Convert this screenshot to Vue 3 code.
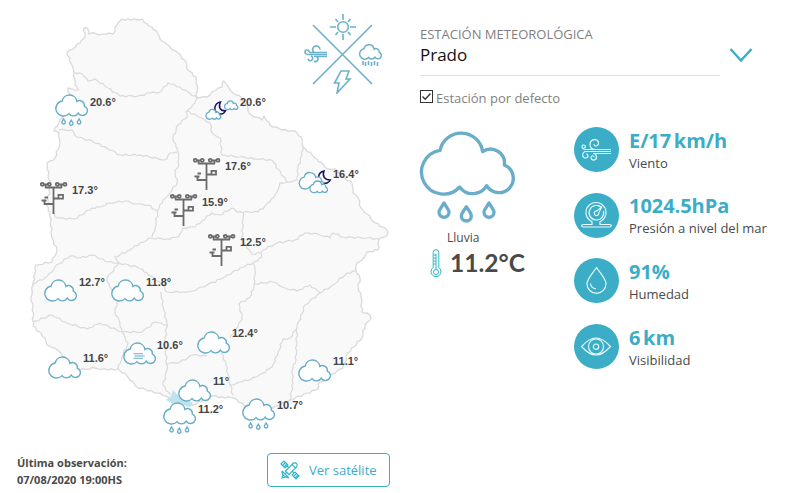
<template>
  <main class="weather">
    <section class="map-panel">
      <div class="map">
        <svg class="map-shape" viewBox="0 0 400 440" aria-hidden="true">
          <path class="land" :d="outlinePath" />
          <path v-for="(d, index) in borderPaths" :key="index" class="border" :d="d" />
          <polygon class="capital" points="173,390 178,395 183,394 188,400 193,403 190,407 179,405 173,404 166,400 171,396" />
        </svg>

        <svg class="compass" width="80" height="80" viewBox="0 0 80 80" aria-hidden="true">
          <path d="M9 11 68 70M68 11 9 70" />
          <circle cx="39" cy="13" r="5.3" />
          <path d="M39 0v6M39 20v6M26 13h6M46 13h6M31.500 5l2.500 3M46.500 5 44 8M31.500 21l2.500-3M46.500 21l-2.500-3" />
          <path d="M37 57h8l-3 8h4L33 79l2-10h-4.500z" />
          <g transform="translate(55 30) scale(.079)">
            <path class="compass-cloud" :d="cloudPath" transform="translate(-42 -30)" />
          </g>
          <path d="M59 47v4M61.500 48v4M64.500 47v4M67.500 48v4M70.500 47v4M73.500 48v4" />
          <path d="M3 40.500h20M10 42.500h13M5 38.500h18M3 40a2 2 0 1 1 2-2M10 38.500a3.700 3.700 0 1 1 6-3M7 42a2.400 2.400 0 1 1-3 3M13 43a2.500 2.500 0 1 1-3 4" />
        </svg>

        <template v-for="station in stations" :key="station.id">
          <svg
            v-if="station.icon === 'mast'"
            class="marker"
            :style="{ left: station.x + 'px', top: station.y + 'px' }"
            width="28"
            height="33"
            viewBox="0 0 28 33"
          >
            <g class="mast">
              <circle cx="2.300" cy="2.300" r="1.500" />
              <circle cx="9.300" cy="2.300" r="1.500" />
              <circle cx="17.300" cy="2.300" r="1.500" />
              <circle cx="25" cy="2.300" r="1.500" />
              <path d="M4 2.500h4M19 2.500h4.500M5 5.500h17M5.500 2.500v3M21.500 2.500v3M13.500 5.500V32M13.500 16.500h5M18.500 12.800h4.500v3.800h-4.500zM13.500 22H4.500v-3.500M1.500 18.500h5M4.500 15.500H8" />
            </g>
          </svg>
          <svg
            v-else-if="station.icon === 'night'"
            class="marker"
            :style="{ left: station.x + 'px', top: station.y + 'px' }"
            width="34"
            height="21"
            viewBox="0 0 34 21"
          >
            <path class="small-cloud" :d="cloudPath" transform="translate(17.200 -2) scale(.048)" />
            <path class="moon" d="M15.500 1C9 2.200 8 10 13 12.300c3.500 1.500 6.300 0 7.500-2.500C15 10 13 6 15.500 1z" />
            <path class="small-cloud" :d="cloudPath" transform="translate(-1.700 6.300) scale(.054)" />
          </svg>
          <svg
            v-else-if="station.icon === 'cloudy-night'"
            class="marker"
            :style="{ left: station.x + 'px', top: station.y + 'px' }"
            width="34"
            height="25"
            viewBox="0 0 34 25"
          >
            <path class="moon" d="M26 1C19.500 2.500 19 10 24 12.700c3.500 1.600 7 0 8.300-2.700C26.500 10 24 6 26 1z" />
            <path class="small-cloud" :d="cloudPath" transform="translate(-3.300 -1) scale(.09)" />
            <path class="small-cloud" :d="cloudPath" transform="translate(8.700 8.500) scale(.064)" />
          </svg>
          <svg
            v-else
            class="marker"
            :style="{ left: station.x + 'px', top: station.y + 'px' }"
            width="33"
            height="33"
            viewBox="42 30 288 288"
          >
            <path class="cloud" :d="cloudPath" />
            <path v-if="station.icon === 'rain'" class="cloud" :d="dropsPath" />
            <path v-if="station.icon === 'fog'" class="fog" d="M134 133h83M143 152h88M134 171h83" />
          </svg>
          <span class="temp" :style="{ left: station.tx + 'px', top: station.ty + 'px' }">{{ station.temp }}°</span>
        </template>
      </div>

      <footer class="map-footer">
        <p class="updated">Última observación:<br />07/08/2020 19:00HS</p>
        <button type="button" class="satellite-btn">
          <svg width="20" height="20" viewBox="0 0 20 20" aria-hidden="true">
            <path d="M1 4l3-3 4 4-3 3zM2.500 5.500l3-3M4 7l3-3M12 15l3-3 4 4-3 3zM13.500 16.500l3-3M15 18l3-3M7 6l1.500 1.500M12.500 11.500 14 13M5.500 11l6.500-6.500 3.500 3.500L9 14.500zM12 4.500c1-2 3.500-2 4.500-1s1 3-1 4.500M2 11l7 7M2 11c-.5 3 2 6.500 7 7M3 14l-1 4 4-1M5 14l2-2" />
          </svg>
          <span>Ver satélite</span>
        </button>
      </footer>
    </section>

    <section class="detail-panel">
      <div class="station-picker">
        <div class="station-field">
          <span class="station-label">ESTACIÓN METEOROLÓGICA</span>
          <span class="station-name">Prado</span>
        </div>
        <svg class="chevron" width="24" height="16" viewBox="0 0 24 16" aria-hidden="true">
          <path d="M1.500 2l10.500 11.500L22.500 2" />
        </svg>
      </div>

      <label class="default-station">
        <svg width="13" height="13" viewBox="0 0 13 13" aria-hidden="true">
          <rect x=".5" y=".5" width="12" height="12" />
          <path class="check" d="M2.500 6.500l2.700 2.700 5.300-5.600" />
        </svg>
        <span>Estación por defecto</span>
      </label>

      <div class="conditions">
        <div class="current">
          <svg class="current-icon" width="96" height="94" viewBox="42 30 288 282" aria-hidden="true">
            <path :d="cloudPath" />
            <path :d="dropsPath" />
          </svg>
          <span class="current-name">Lluvia</span>
          <div class="current-temp">
            <svg width="12" height="29" viewBox="0 0 12 29" aria-hidden="true">
              <path d="M3.200 18.500V3.500a2.800 2.800 0 0 1 5.600 0v15a5 5 0 1 1-5.600 0z" />
              <circle cx="6" cy="23" r="2.500" />
              <path d="M6 5v15M3.500 6H6M3.500 9H6M3.500 12H6M3.500 15H6" />
            </svg>
            <span>11.2°C</span>
          </div>
        </div>

        <ul class="readings">
          <li v-for="reading in readings" :key="reading.label">
            <span class="badge">
              <svg width="45" height="45" viewBox="0 0 45 45" aria-hidden="true">
                <path v-for="(d, index) in reading.icon" :key="index" :d="d" />
              </svg>
            </span>
            <div class="reading-text">
              <strong>{{ reading.value }}</strong>
              <span class="reading-label">{{ reading.label }}</span>
            </div>
          </li>
        </ul>
      </div>
    </section>
  </main>
</template>

<script setup>
const cloudPath =
  'M105 91A65 65 0 0 1 233 95A41.6 41.6 0 0 1 298 135A43 43 0 1 1 245 197A48.3 48.3 0 0 1 164 201A66 66 0 1 1 105 91Z'

const drop = (x, y) => `M${x} ${y}C${x - 6} ${y + 12} ${x - 15} ${y + 18} ${x - 15} ${y + 28}a15 15 0 0 0 30 0C${x + 15} ${y + 18} ${x + 6} ${y + 12} ${x} ${y}Z`
const dropsPath = drop(117, 249) + drop(184, 260) + drop(252, 249)

const outline = [
  84, 28, 87, 28, 89, 34, 94, 33, 99, 35, 106, 34, 113, 34, 117, 25, 122, 19, 131, 20, 142, 19, 147, 24, 152, 27,
  158, 34, 162, 41, 170, 47, 178, 53, 186, 62, 188, 70, 196, 77, 197, 85, 197, 98, 207, 97, 212, 92, 216, 90, 222, 87,
  223, 81, 227, 85, 233, 93, 242, 98, 248, 108, 250, 114, 262, 120, 264, 116, 270, 125, 282, 130, 295, 131,
  301, 137, 303, 147, 317, 159, 328, 169, 335, 169, 343, 177, 352, 183, 353, 193, 358, 198, 361, 208, 367, 214,
  375, 223, 383, 227, 388, 232, 385, 237, 379, 239, 378, 250, 367, 252, 362, 260, 357, 263, 356, 270, 360, 278,
  358, 287, 361, 297, 362, 312, 367, 313, 371, 318, 365, 325, 362, 338, 348, 353, 343, 368, 332, 374, 318, 384,
  318, 389, 290, 400, 273, 408, 255, 412, 242, 403, 233, 398, 222, 397, 212, 396, 202, 401, 193, 405, 178, 404,
  166, 396, 157, 393, 137, 387, 127, 376, 118, 369, 108, 370, 95, 368, 80, 370, 62, 355, 55, 348, 47, 345,
  45, 338, 33, 326, 33, 307, 31, 297, 33, 285, 36, 265, 52, 262, 57, 250, 52, 238, 50, 213, 47, 205, 50, 187,
  47, 163, 55, 158, 60, 143, 59, 133, 54, 131, 58, 125, 65, 110, 70, 97, 68, 88, 78, 90, 75, 85, 74, 73,
  71, 63, 67, 53, 80, 43, 85, 37, 84, 28
]

const borders = [
  [74, 72, 82, 74, 88, 81, 95, 79, 108, 88, 120, 96, 138, 96, 150, 93, 160, 92, 168, 83, 180, 87, 188, 92, 197, 98],
  [197, 98, 193, 105, 186, 112, 187, 117, 178, 125, 173, 138, 176, 147, 178, 153, 179, 165, 175, 170, 177, 183, 170, 193, 163, 200, 158, 210, 155, 228, 152, 237],
  [59, 130, 72, 130, 77, 137, 92, 141, 107, 148, 120, 155, 140, 155, 165, 160, 170, 153, 177, 152],
  [52, 212, 57, 218, 75, 219, 92, 208, 100, 207, 110, 203, 125, 201, 137, 204, 148, 205, 157, 211],
  [32, 284, 45, 278, 52, 272, 55, 267, 70, 256, 80, 258, 92, 255, 108, 262, 119, 263],
  [119, 263, 115, 257, 130, 250, 140, 243, 152, 238, 167, 239, 178, 237, 183, 228, 195, 227, 202, 221, 212, 213, 220, 215, 232, 208, 237, 212, 258, 212, 270, 202, 277, 192, 280, 183, 287, 182, 297, 180, 298, 168, 302, 155, 303, 147],
  [187, 111, 202, 118, 210, 123, 212, 133, 220, 138, 222, 155, 240, 157, 257, 159, 272, 160, 287, 182],
  [243, 212, 243, 220, 242, 240, 247, 248, 252, 254, 261, 253, 262, 257, 253, 263, 240, 268, 223, 278, 207, 285, 192, 291, 183, 292, 167, 292, 163, 285, 147, 273, 137, 267, 119, 263],
  [261, 253, 263, 250, 277, 243, 295, 240, 305, 233, 318, 234, 330, 238, 333, 233, 343, 237, 367, 238, 380, 239],
  [253, 263, 255, 270, 254, 287, 250, 297, 239, 304, 242, 317, 238, 327, 230, 338],
  [255, 284, 273, 282, 285, 288, 297, 291, 310, 285, 320, 293, 333, 285, 347, 273, 356, 271],
  [320, 293, 305, 305, 297, 327, 296, 360, 292, 370, 293, 383, 290, 400],
  [297, 328, 290, 338, 283, 339, 278, 353, 272, 367, 257, 377, 242, 382, 230, 385],
  [222, 353, 226, 365, 229, 380, 233, 395],
  [207, 356, 193, 355, 180, 362, 167, 364],
  [161, 292, 163, 307, 167, 323, 165, 340, 167, 370, 163, 385, 170, 395],
  [33, 322, 52, 315, 67, 323, 87, 329, 100, 323, 122, 332, 142, 332, 155, 322, 167, 325],
  [119, 263, 107, 278, 110, 287, 117, 302, 115, 312, 120, 323, 122, 332, 128, 343, 122, 357, 118, 369]
]

// Adds small notches between points so borders read as rivers and coast
const rough = (points) => {
  let d = `M${points[0]} ${points[1]}`
  for (let i = 2; i < points.length; i += 2) {
    const [x0, y0, x1, y1] = points.slice(i - 2, i + 2)
    const length = Math.hypot(x1 - x0, y1 - y0)
    const parts = Math.max(1, Math.round(length / 3))
    for (let k = 1; k < parts; k++) {
      const t = k / parts
      const shift = Math.sin(x0 * 12.9 + y0 * 7.3 + k * 4.1) * 0.9
      d += `L${(x0 + (x1 - x0) * t - ((y1 - y0) / length) * shift).toFixed(1)} ${(y0 + (y1 - y0) * t + ((x1 - x0) / length) * shift).toFixed(1)}`
    }
    d += `L${x1} ${y1}`
  }
  return d
}

const outlinePath = rough(outline) + 'Z'
const borderPaths = borders.map(rough)

const stations = [
  { id: 1, icon: 'rain', x: 55, y: 94, temp: '20.6', tx: 90, ty: 102 },
  { id: 2, icon: 'night', x: 205, y: 101, temp: '20.6', tx: 240, ty: 102 },
  { id: 3, icon: 'mast', x: 193, y: 158, temp: '17.6', tx: 225, ty: 166 },
  { id: 4, icon: 'cloudy-night', x: 298, y: 170, temp: '16.4', tx: 333, ty: 174 },
  { id: 5, icon: 'mast', x: 40, y: 182, temp: '17.3', tx: 72, ty: 190 },
  { id: 6, icon: 'mast', x: 170, y: 194, temp: '15.9', tx: 202, ty: 202 },
  { id: 7, icon: 'mast', x: 208, y: 234, temp: '12.5', tx: 240, ty: 242 },
  { id: 8, icon: 'cloud', x: 44, y: 279, temp: '12.7', tx: 79, ty: 282 },
  { id: 9, icon: 'cloud', x: 111, y: 279, temp: '11.8', tx: 146, ty: 282 },
  { id: 10, icon: 'fog', x: 122.5, y: 341.5, temp: '10.6', tx: 157, ty: 345 },
  { id: 11, icon: 'cloud', x: 197, y: 331, temp: '12.4', tx: 232, ty: 333 },
  { id: 12, icon: 'cloud', x: 48, y: 356, temp: '11.6', tx: 83, ty: 358 },
  { id: 13, icon: 'cloud', x: 298, y: 359, temp: '11.1', tx: 333, ty: 361 },
  { id: 14, icon: 'cloud', x: 178, y: 379, temp: '11', tx: 213, ty: 381 },
  { id: 15, icon: 'rain', x: 163, y: 402, temp: '11.2', tx: 198, ty: 409 },
  { id: 16, icon: 'rain', x: 242, y: 398, temp: '10.7', tx: 277, ty: 405 }
]

const readings = [
  {
    value: 'E/17 km/h',
    label: 'Viento',
    icon: [
      'M11 22.500h26M17 24.500h20M20 26.500h17',
      'M11 22.500c-2-.5-3.500-2-3-3.500.5-1.500 3.500-1.200 3.500.5 0 1-1 1.500-1.700 1',
      'M22 22.500c-4 0-6-2-6-5 0-6 8.500-6.500 8.500-1.500 0 3.500-4.500 4-4.500 1.200',
      'M17 24.500h-5c-4 0-4.500 6.500-.5 6.500 3.500 0 3-4.500.5-4',
      'M23 26.500h-4c2.500 0 3.500 1.500 3.500 3.500 0 4-5.500 4-5.500.5 0-2.300 3-2.300 3-.3'
    ]
  },
  {
    value: '1024.5hPa',
    label: 'Presión a nivel del mar',
    icon: [
      'M22 9.500a10 10 0 0 0-4 19.200v2.800H9.500c-2.500 0-2.500 2.500 0 2.500h26c2.500 0 2.500-2.500 0-2.500H26v-2.800a10 10 0 0 0-4-19.200z',
      'M27.500 14.500a7.300 7.300 0 1 0 2 3.500',
      'M28 13.500l-5 4.500a2.300 2.300 0 1 0 1.800 1.800z'
    ]
  },
  {
    value: '91%',
    label: 'Humedad',
    icon: ['M22.500 9.500C19 15 13 21 13 25.800a9.500 9.500 0 0 0 19 0C32 21 26 15 22.500 9.500z', 'M16.500 25.500c.3 3 2.500 5 5.500 5.200']
  },
  {
    value: '6 km',
    label: 'Visibilidad',
    icon: [
      'M7.500 22.500c5-5.500 9.500-8.500 14.500-8.500s9.500 3 14.500 8.500C31.500 28 27 31 22 31s-9.500-3-14.500-8.500z',
      'M22 15a7.500 7.500 0 1 0 0 15 7.500 7.500 0 0 0 0-15z',
      'M22 20a2.700 2.700 0 1 0 0 5.400 2.700 2.700 0 0 0 0-5.400z'
    ]
  }
]
</script>

<style>
body {
  background: #fff;
}
</style>

<style scoped>
.weather {
  display: flex;
  height: 493px;
  overflow: hidden;
  font-family: "Open Sans", sans-serif;
  color: #4a4a4a;
}

svg {
  display: block;
  flex: none;
  fill: none;
}

.map-panel {
  width: 400px;
  flex: none;
}

.map {
  position: relative;
  height: 453px;
}

.map-shape {
  width: 400px;
  height: 440px;
}

.land {
  fill: #f9f9f9;
  stroke: #dadada;
  stroke-width: 1.3;
}

.border {
  stroke: #dadada;
  stroke-width: 1.2;
}

.capital {
  fill: #c0e3eb;
}

.compass {
  position: absolute;
  left: 304px;
  top: 14px;
  stroke: #6db1cb;
  stroke-width: 1.6;
}

.compass-cloud {
  stroke-width: 19;
}

.marker {
  position: absolute;
  overflow: visible;
}

.cloud {
  fill: #fff;
  stroke: #67adca;
  stroke-width: 12;
}

.small-cloud {
  fill: #fff;
  stroke: #67adca;
  stroke-width: 1.3;
  vector-effect: non-scaling-stroke;
}

.fog {
  stroke: #67adca;
  stroke-width: 9;
}

.moon {
  stroke: #1b1464;
  stroke-width: 1.5;
}

.mast {
  stroke: #6b6b6b;
  stroke-width: 1.8;
}

.temp {
  position: absolute;
  transform: translateY(-50%);
  font: bold 11px/14px "Liberation Sans", Arial, sans-serif;
  color: #444;
}

.map-footer {
  display: flex;
  justify-content: space-between;
  padding: 0 10px 0 17px;
}

.updated {
  margin: 1px 0 0;
  font-size: 11px;
  line-height: 17px;
  font-weight: 700;
}

.satellite-btn {
  display: flex;
  align-items: center;
  gap: 9px;
  width: 123px;
  height: 34px;
  padding: 0 0 0 12px;
  border: 1px solid #3badc7;
  border-radius: 4px;
  background: #fff;
  color: #3badc7;
  font: 13px "Open Sans", sans-serif;
  white-space: nowrap;
}

.satellite-btn svg {
  stroke: #2fb5c8;
  stroke-width: 1.1;
}

.detail-panel {
  flex: 1;
  padding: 25px 0 0 20px;
}

.station-picker {
  display: flex;
  align-items: flex-start;
}

.station-field {
  display: flex;
  flex-direction: column;
  width: 300px;
  height: 50px;
  border-bottom: 1px solid #e1e1e1;
}

.station-label {
  font-size: 13px;
  line-height: 18px;
  color: #7f7f7f;
}

.station-name {
  margin-top: 1px;
  font-size: 17px;
  line-height: 22px;
  color: #111;
}

.chevron {
  margin: 22px 0 0 9px;
  stroke: #3badc7;
  stroke-width: 2.4;
}

.default-station {
  display: flex;
  align-items: center;
  gap: 3px;
  height: 18px;
  margin-top: 13px;
  font-size: 13px;
  color: #7f7f7f;
}

.default-station svg {
  margin-bottom: 4px;
  stroke: #333;
}

.default-station .check {
  stroke-width: 1.4;
}

.conditions {
  display: flex;
  margin-top: 20px;
}

.current {
  width: 154px;
  padding-top: 3px;
}

.current-icon {
  margin-left: -1px;
  stroke: #6aadca;
  stroke-width: 10;
  stroke-linejoin: round;
}

.current-name {
  display: block;
  margin: 6px 0 0 27px;
  font-size: 12px;
  line-height: 16px;
}

.current-temp {
  display: flex;
  align-items: center;
  gap: 8px;
  margin: 0 0 0 10px;
  font: bold 24.5px/34px Lato, sans-serif;
  white-space: nowrap;
}

.current-temp svg {
  stroke: #2fb5c8;
  stroke-width: 1;
}

.readings {
  display: flex;
  flex-direction: column;
  gap: 20.7px;
  margin: 0;
  padding: 0;
  list-style: none;
}

.readings li {
  display: flex;
  align-items: center;
  gap: 10px;
  height: 45px;
}

.badge {
  width: 45px;
  height: 45px;
  border-radius: 50%;
  background: #3badc7;
}

.badge svg {
  stroke: #e9fbff;
  stroke-width: 1.15;
}

.reading-text {
  padding-top: 2px;
}

strong {
  display: block;
  font-size: 20px;
  line-height: 24px;
  letter-spacing: -0.05px;
  word-spacing: -2.5px;
  color: #3badc7;
}

.reading-label {
  display: block;
  font-size: 13px;
  line-height: 20px;
}
</style>
